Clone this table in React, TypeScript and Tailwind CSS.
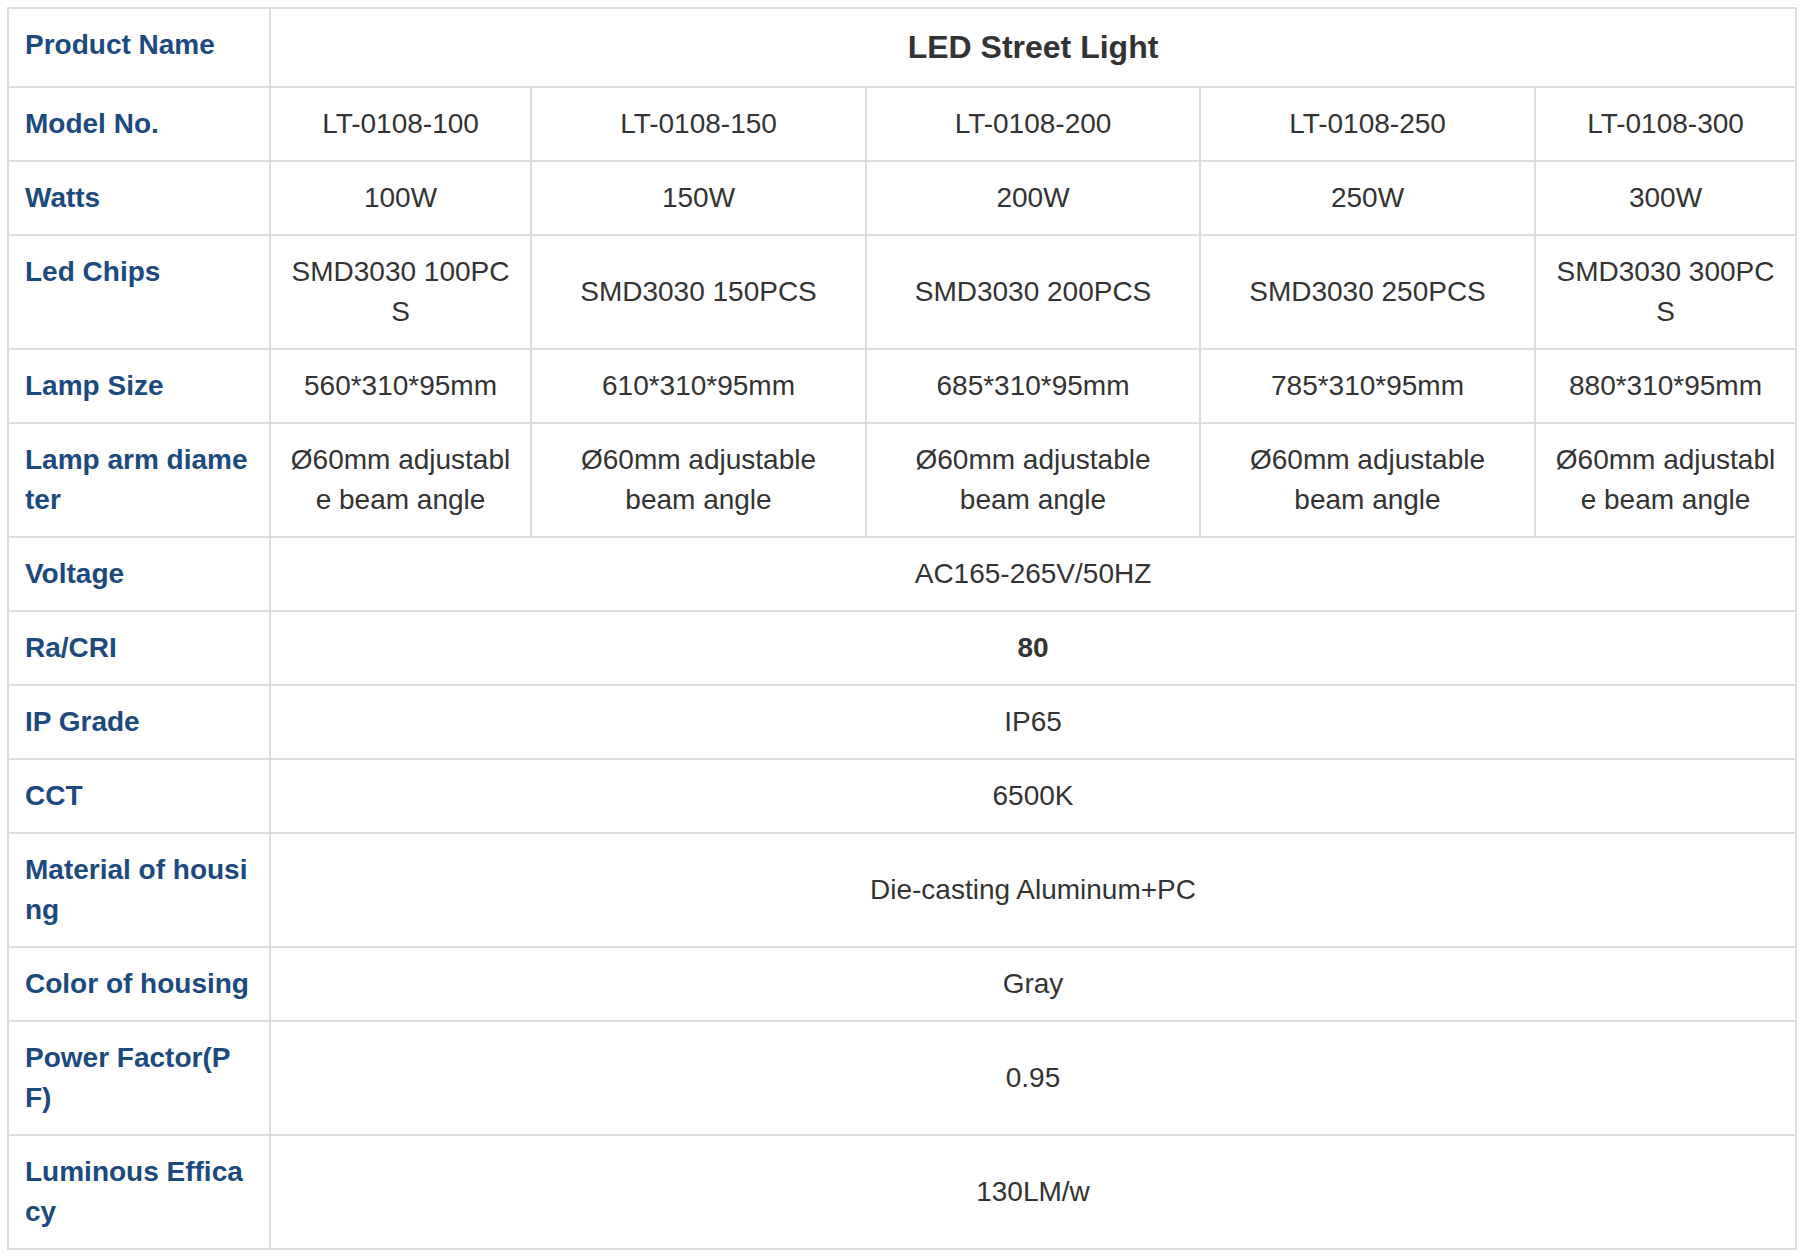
const models = [
  {
    model: "LT-0108-100",
    watts: "100W",
    chips: "SMD3030 100PCS",
    size: "560*310*95mm",
  },
  {
    model: "LT-0108-150",
    watts: "150W",
    chips: "SMD3030 150PCS",
    size: "610*310*95mm",
  },
  {
    model: "LT-0108-200",
    watts: "200W",
    chips: "SMD3030 200PCS",
    size: "685*310*95mm",
  },
  {
    model: "LT-0108-250",
    watts: "250W",
    chips: "SMD3030 250PCS",
    size: "785*310*95mm",
  },
  {
    model: "LT-0108-300",
    watts: "300W",
    chips: "SMD3030 300PCS",
    size: "880*310*95mm",
  },
];

const shared = [
  { label: "Voltage", value: "AC165-265V/50HZ" },
  { label: "Ra/CRI", value: "80", bold: true },
  { label: "IP Grade", value: "IP65" },
  { label: "CCT", value: "6500K" },
  { label: "Material of housing", value: "Die-casting Aluminum+PC" },
  { label: "Color of housing", value: "Gray" },
  { label: "Power Factor(PF)", value: "0.95" },
  { label: "Luminous Efficacy", value: "130LM/w" },
];

function Label({ children }: { children: string }) {
  return (
    <div className="bg-white px-4 py-4 font-bold text-[#1c4a7e] break-all">
      {children}
    </div>
  );
}

function Cell({
  children,
  wide,
  bold,
  narrow,
}: {
  children: string;
  wide?: boolean;
  bold?: boolean;
  narrow?: boolean;
}) {
  return (
    <div
      className={`bg-white px-4 py-4 flex items-center justify-center text-center text-[#333] ${
        wide ? "col-span-5" : ""
      } ${bold ? "font-bold" : ""} ${narrow ? "break-all" : ""}`}
    >
      {children}
    </div>
  );
}

// first and last model columns are the narrow ones that break mid-word
const isNarrow = (i: number) => i === 0 || i === models.length - 1;

export default function App() {
  return (
    <div className="min-h-screen bg-white pt-[7px] pl-[7px]">
      <div
        className="grid w-[1790px] grid-cols-[260px_259px_333px_332px_333px_259px] gap-[2px] bg-[#dedede] p-[2px] text-[28px] leading-[40px]"
        style={{ fontFamily: '"Liberation Sans", Arial, Helvetica, sans-serif' }}
      >
        <Label>Product Name</Label>
        <div className="col-span-5 flex items-center justify-center bg-white px-4 py-4 text-[32px] leading-[45px] font-bold text-[#333]">
          LED Street Light
        </div>

        <Label>Model No.</Label>
        {models.map((m, i) => (
          <Cell key={m.model} narrow={isNarrow(i)}>
            {m.model}
          </Cell>
        ))}

        <Label>Watts</Label>
        {models.map((m, i) => (
          <Cell key={m.watts} narrow={isNarrow(i)}>
            {m.watts}
          </Cell>
        ))}

        <Label>Led Chips</Label>
        {models.map((m, i) => (
          <Cell key={m.chips} narrow={isNarrow(i)}>
            {m.chips}
          </Cell>
        ))}

        <Label>Lamp Size</Label>
        {models.map((m, i) => (
          <Cell key={m.size} narrow={isNarrow(i)}>
            {m.size}
          </Cell>
        ))}

        <Label>Lamp arm diameter</Label>
        {models.map((m, i) => (
          <Cell key={m.model + "-arm"} narrow={isNarrow(i)}>
            Ø60mm adjustable beam angle
          </Cell>
        ))}

        {shared.map((row) => (
          <>
            <Label key={row.label}>{row.label}</Label>
            <Cell key={row.label + "-v"} wide bold={row.bold}>
              {row.value}
            </Cell>
          </>
        ))}
      </div>
    </div>
  );
}
